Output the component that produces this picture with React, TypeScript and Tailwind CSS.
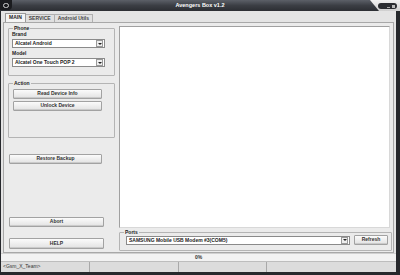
import type { ReactNode } from "react";

const font = { fontFamily: '"Liberation Sans", Arial, sans-serif' };

function Btn({ label, className }: { label: string; className: string }) {
    return (
        <div className={`flex items-center justify-center border border-[#a2a2a2] rounded-[1px] bg-gradient-to-b from-[#fbfbfb] to-[#e2e2e2] text-[5px] font-bold text-[#333] shadow-[inset_0_-1px_0_#cacaca] ${className}`}>
            {label}
        </div>
    );
}

function Select({ value, className }: { value: string; className: string }) {
    return (
        <div className={`flex items-center border border-[#8a8a8a] bg-white h-[9px] ${className}`}>
            <span className="flex-1 pl-[2px] text-[5px] font-bold text-[#222] leading-none truncate">{value}</span>
            <span className="w-[7px] h-[7px] mr-[1px] border border-[#999] bg-[#eee] flex items-center justify-center">
                <span className="w-0 h-0 border-l-[2px] border-r-[2px] border-t-[2px] border-l-transparent border-r-transparent border-t-[#222]" />
            </span>
        </div>
    );
}

function Group({ title, className, children }: { title: string; className: string; children?: ReactNode }) {
    return (
        <fieldset className={`border border-[#b4b4b4] rounded-[1px] px-[3px] m-0 min-w-0 ${className}`}>
            <legend className="text-[5px] font-bold text-[#222] px-[1px] ml-[1px] leading-none">{title}</legend>
            {children}
        </fieldset>
    );
}

export default function App() {
    return (
        <div style={font} className="w-[400px] h-[275px] bg-[#26282c] flex flex-col overflow-hidden">
            {/* title bar */}
            <div className="h-[11px] relative flex items-center justify-center bg-gradient-to-b from-[#5c6068] via-[#3b3e44] to-[#2c2e33]">
                <div className="absolute left-0 top-0 w-[12px] h-[10px] rounded-br-[4px] bg-[#1b1c1f] flex items-center justify-center">
                    <div className="w-[6px] h-[5px] rounded-full border border-[#d0d0d0]" />
                </div>
                <span className="text-[5.5px] font-bold text-white">Avengers Box v1.2</span>
                <div className="absolute right-0 top-0 h-[11px] w-[30px] bg-gradient-to-b from-[#f2f2f2] to-[#cfcfcf] [clip-path:polygon(0_0,100%_0,100%_100%,30%_100%)]" />
                <div className="absolute right-[3px] top-[3px] w-[19px] h-[6px] rounded-[3px] bg-[#2b2d31] flex items-center justify-end gap-[2px] pr-[2px]">
                    <span className="w-[3px] h-[1px] bg-[#aaa] mt-[2px]" />
                    <span className="w-[3px] h-[3px] bg-[#bbb]" />
                </div>
            </div>

            {/* body */}
            <div className="flex-1 flex flex-col bg-[#e4e4e4] ml-[1px] mr-[4px] mb-[3px]">
                {/* tabs */}
                <div className="h-[11px] flex items-end pl-[4px] pt-[2px]">
                    <div className="h-[9px] px-[3px] flex items-center border border-b-0 border-[#9a9a9a] bg-[#f4f4f4] text-[5px] font-bold text-[#222]">MAIN</div>
                    <div className="h-[8px] px-[3px] flex items-center border border-b-0 border-l-0 border-[#b0b0b0] bg-[#e0e0e0] text-[5px] font-bold text-[#444]">SERVICE</div>
                    <div className="h-[8px] px-[3px] flex items-center border border-b-0 border-l-0 border-[#b0b0b0] bg-[#e0e0e0] text-[5px] font-bold text-[#444]">Android Utils</div>
                </div>

                {/* tab panel */}
                <div className="flex gap-[4px] h-[231px] ml-[2px] mr-[2px] border border-[#a8a8a8] bg-[#ebebeb] pl-[4px] pr-[1px] pt-[3px] pb-[1px]">
                    <div className="w-[107px] flex flex-col">
                        <Group title="Phone" className="h-[50px] pb-[2px]">
                            <div className="text-[5px] font-bold text-[#222] leading-none mt-[1px]">Brand</div>
                            <Select value="Alcatel Android" className="mt-[2px] w-[93px]" />
                            <div className="text-[5px] font-bold text-[#222] leading-none mt-[3px]">Model</div>
                            <Select value="Alcatel One Touch POP 2" className="mt-[2px] w-[93px]" />
                        </Group>
                        <Group title="Action" className="h-[57px] mt-[5px] pt-[3px]">
                            <Btn label="Read Device Info" className="w-[89px] h-[10px] ml-[1px]" />
                            <Btn label="Unlock Device" className="w-[89px] h-[10px] ml-[1px] mt-[2px]" />
                        </Group>
                        <Btn label="Restore Backup" className="w-[93px] h-[10px] mt-[16px] ml-[1px]" />
                        <div className="flex-1" />
                        <Btn label="Abort" className="w-[95px] h-[10px] ml-[1px]" />
                        <Btn label="HELP" className="w-[95px] h-[11px] ml-[1px] mt-[11px] mb-[2px]" />
                    </div>
                    <div className="flex-1 flex flex-col">
                        <div className="flex-1 bg-white border border-[#a0a0a0] border-r-[#d8d8d8] border-b-[#d8d8d8] mr-[2px]" />
                        <Group title="Ports" className="h-[21px] mt-[2px] pb-[2px]">
                            <div className="flex items-center gap-[4px] pl-[3px]">
                                <Select value="SAMSUNG Mobile USB Modem #3(COM5)" className="w-[224px]" />
                                <Btn label="Refresh" className="w-[34px] h-[10px]" />
                            </div>
                        </Group>
                    </div>
                </div>

                {/* progress */}
                <div className="h-[8px] bg-[#f2f2f2] border-t border-[#d0d0d0] flex items-center justify-center">
                    <span className="text-[5px] font-bold text-[#333] leading-none">0%</span>
                </div>

                {/* status bar */}
                <div className="flex-1 flex border-t border-[#bdbdbd] bg-[#dcdcdc] text-[5px] text-[#333]">
                    <div className="w-[89px] border-r border-[#a8a8a8] flex items-center pl-[2px]">&lt;Gsm_X_Team&gt;</div>
                    <div className="w-[89px] border-r border-[#a8a8a8]" />
                    <div className="w-[88px] border-r border-[#a8a8a8]" />
                    <div className="flex-1" />
                </div>
            </div>
        </div>
    );
}
